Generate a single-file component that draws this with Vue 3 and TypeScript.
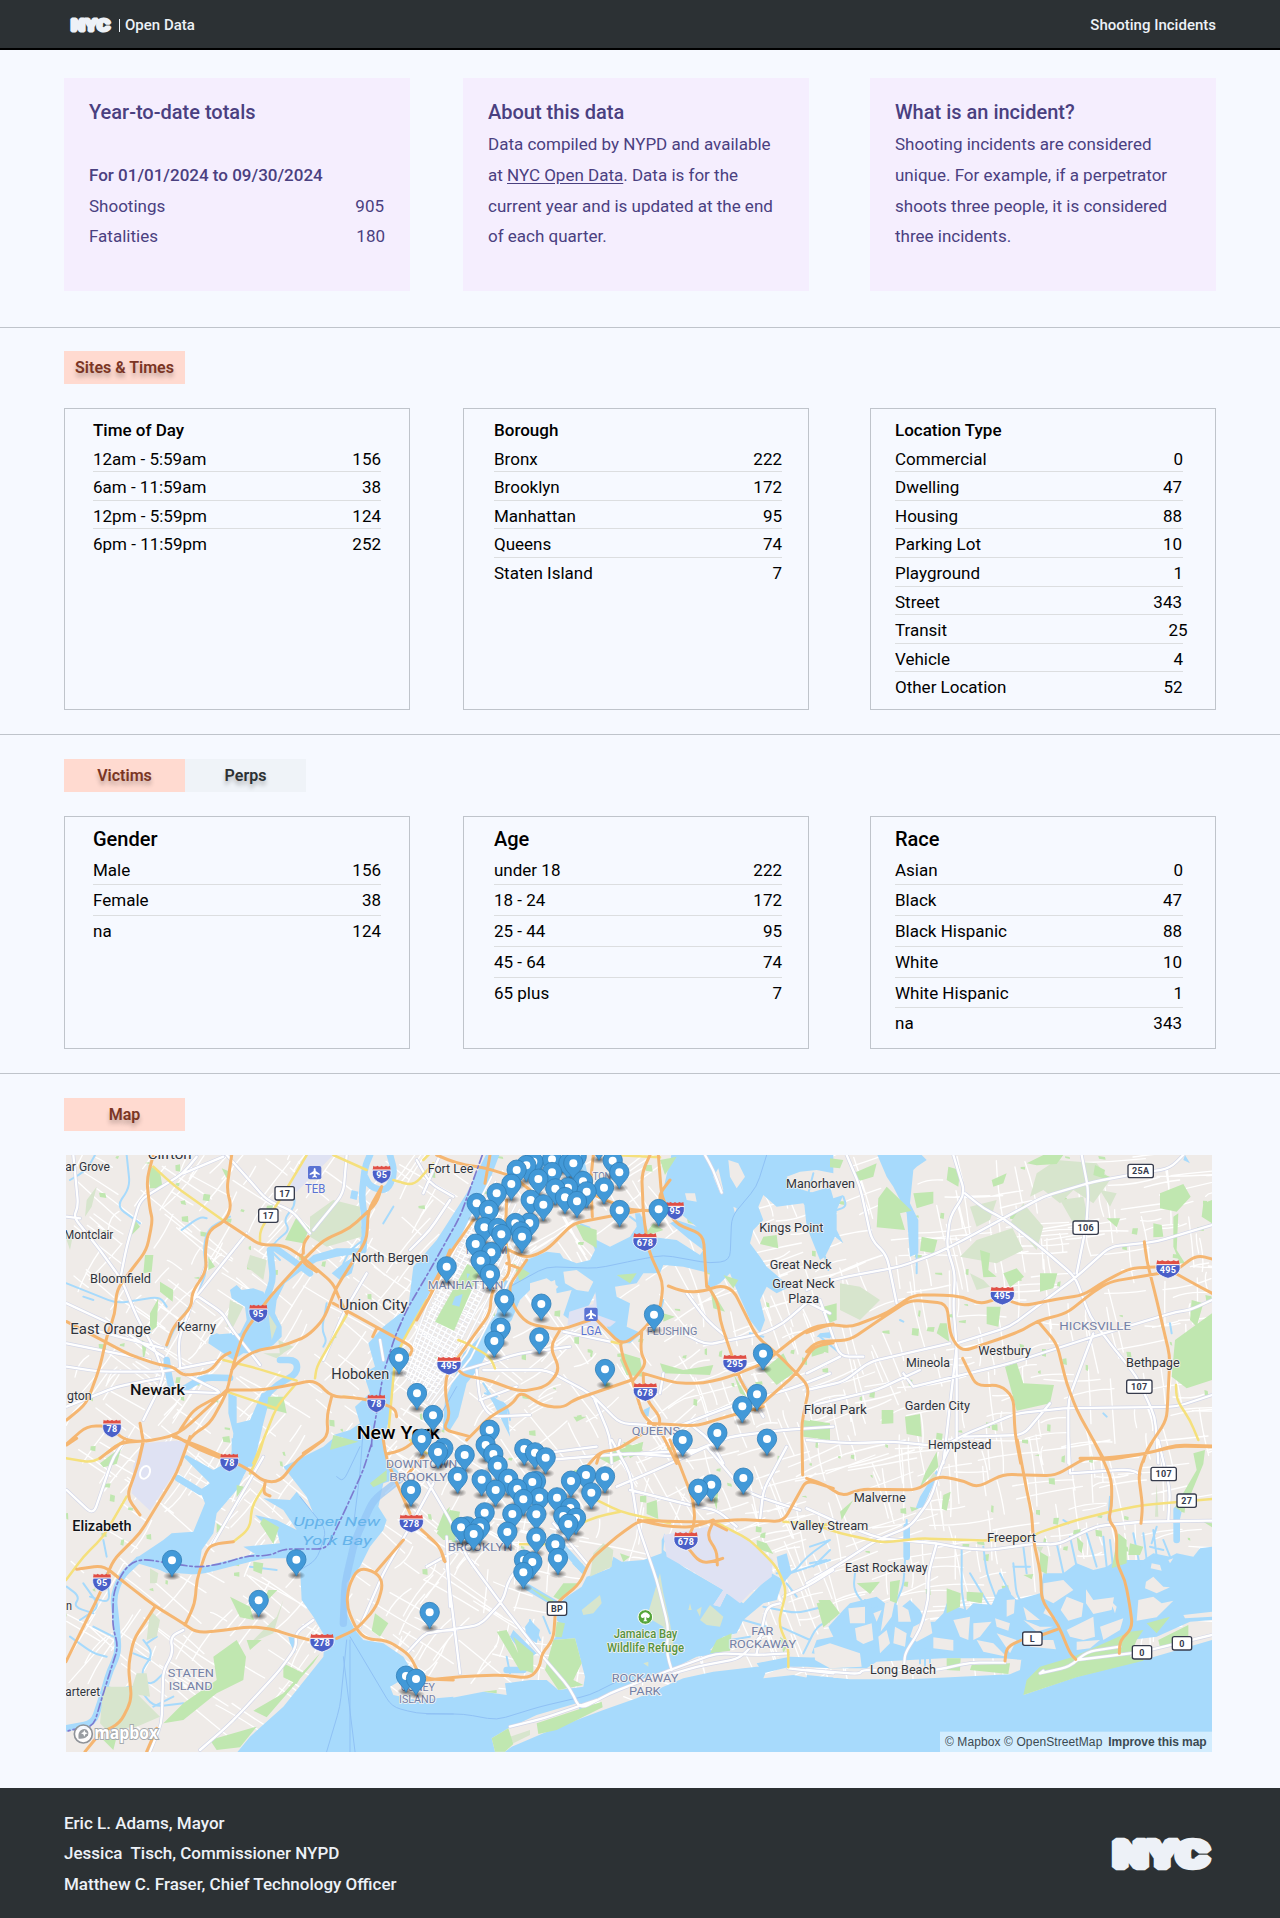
<script setup lang="ts">
interface Row { label: string; value: string; shift: number }
interface Panel { title: string; rows: Row[] }

const r = (label: string, value: string, shift = 0): Row => ({ label, value, shift })

const siteTables: Panel[] = [
  { title: 'Time of Day', rows: [r('12am - 5:59am', '156'), r('6am - 11:59am', '38'), r('12pm - 5:59pm', '124'), r('6pm - 11:59pm', '252')] },
  { title: 'Borough', rows: [r('Bronx', '222'), r('Brooklyn', '172'), r('Manhattan', '95'), r('Queens', '74'), r('Staten Island', '7')] },
  { title: 'Location Type', rows: [r('Commercial', '0'), r('Dwelling', '47', -1), r('Housing', '88', -1), r('Parking Lot', '10', -1), r('Playground', '1'), r('Street', '343', -1), r('Transit', '25', 4.5), r('Vehicle', '4'), r('Other Location', '52', -0.5)] },
]
const peopleTables: Panel[] = [
  { title: 'Gender', rows: [r('Male', '156'), r('Female', '38'), r('na', '124')] },
  { title: 'Age', rows: [r('under 18', '222'), r('18 - 24', '172'), r('25 - 44', '95'), r('45 - 64', '74'), r('65 plus', '7')] },
  { title: 'Race', rows: [r('Asian', '0'), r('Black', '47', -1), r('Black Hispanic', '88', -1), r('White', '10', -1), r('White Hispanic', '1'), r('na', '343', -1)] },
]

/* The map is split into six sheets; each geometry string is local to its sheet. */
type Sheet = 'a' | 'b' | 'c' | 'd' | 'e' | 'f'
const origin: Record<Sheet, [number, number]> = {
  a: [0, 0], b: [1140, 0], c: [2280, 0], d: [0, 900], e: [1140, 900], f: [2280, 900],
}
type Layer = Partial<Record<Sheet, string>>
const lines = (layer: Layer): number[][][] =>
  (Object.keys(layer) as Sheet[]).flatMap((k) => {
    const [ox, oy] = origin[k]
    return (layer[k] as string).split(';').map((s) => s.trim()).filter(Boolean).map((s) =>
      s.split(/\s+/).map((q) => q.split(',').map(Number)).map(([x, y]) => [x + ox, y + oy]))
  })
/* All polygons get the same winding, so overlapping shapes merge instead of cutting holes. */
const build = (layer: Layer): string =>
  lines(layer).map((p) => {
    let area = 0
    p.forEach((a, i) => { const b = p[(i + 1) % p.length]; area += a[0] * b[1] - b[0] * a[1] })
    if (area < 0) p.reverse()
    return 'M' + p.map((a) => a.join(',')).join('L') + 'Z'
  }).join('')
/* Rounded corners for line work. */
const smooth = (layer: Layer): string =>
  lines(layer).map((p) => {
    let d = `M${p[0][0]},${p[0][1]}`
    for (let i = 1; i < p.length - 1; i++) {
      const a = p[i - 1], b = p[i], c = p[i + 1]
      const l1 = Math.hypot(b[0] - a[0], b[1] - a[1]), l2 = Math.hypot(c[0] - b[0], c[1] - b[1])
      const t1 = Math.min(28, l1 / 2) / l1, t2 = Math.min(28, l2 / 2) / l2
      d += `L${b[0] + (a[0] - b[0]) * t1},${b[1] + (a[1] - b[1]) * t1}Q${b[0]},${b[1]} ${b[0] + (c[0] - b[0]) * t2},${b[1] + (c[1] - b[1]) * t2}`
    }
    const e = p[p.length - 1]
    return d + `L${e[0]},${e[1]}`
  }).join('')

const water = build({
  a: '1310,40 1250,160 1160,300 1090,380 1075,500 1000,560 955,610 975,680 940,700 960,760 915,800 930,850 900,870 850,885 920,905 830,930 840,980 1005,980 1000,900 1020,830 1035,700 1050,620 1100,530 1170,400 1230,300 1300,170 1350,40;540,450 560,435 575,450 610,445 640,455 655,480 700,430 745,385 790,345 860,325 930,325 935,340 860,350 800,365 750,395 705,430 680,480 675,520 695,560 695,590 670,615 620,640 580,640 550,660 520,640 475,610 478,590 500,580 530,590 570,580 590,540 585,500 545,475;480,585 545,580 555,600 500,610;535,760 560,770 560,850 600,840 635,760 665,755 640,850 610,980 540,980 550,880 535,820;905,150 925,155 920,180 900,175;845,400 880,370 920,345 905,400 870,420',
  b: '725,40 1210,40 1210,100 1160,90 1110,95 1070,110 1090,140 1150,160 1180,175 1150,180 1180,250 1180,280 1150,250 1120,190 1040,200 1000,165 985,200 1000,240 970,270 960,310 990,350 1010,380 1080,440 1040,460 1010,440 990,480 1005,540 990,580 960,540 920,450 900,400 870,430 830,450 840,400 760,380 700,375 690,400 640,400 620,430 555,440 560,470 600,490 590,560 635,580 600,610 570,610 550,590 530,560 500,530 495,460 470,510 420,540 400,525 425,450 380,460 375,420 300,450 270,480 245,540 210,580 190,600 150,680 110,730 85,830 60,870 38,870 45,780 70,720 100,640 150,590 200,520 210,470 225,420 250,430 290,360 350,335 390,340 400,355 440,370 480,360 495,330 470,270 440,245 480,260 500,300 540,320 600,290 620,260 615,220 630,220 650,260 660,290 740,300 810,345 820,330 780,300 720,250 740,240 800,260 750,220 690,190;75,470 100,465 80,500 62,490;640,810 660,800 655,830 640,825;165,750 230,800 240,890 225,860 190,790;440,40 460,40 470,130 450,120',
  c: '200,40 330,40 350,60 320,80 310,90 300,190 325,240 325,340 300,350 290,220 250,140 230,110;-20,165 60,140 70,175 100,165 80,210 80,270 100,310 75,290 45,350 30,360 -10,260;1125,45 1140,70 1120,60;30,580 70,575 60,595 20,590',
  d: '545,-5 610,-5 605,60 560,150 500,220 490,280 455,330 445,400 350,400 310,380 265,350 340,300 365,280 430,275 465,190 455,165 375,120 385,110 450,150 480,130 400,50 410,45 490,90 545,60;850,-5 1000,-5 1010,60 1060,110 1000,130 985,200 1010,240 1000,270 960,320 930,380 890,430 890,520 915,570 940,600 1000,610 1060,650 1090,700 1020,740 1030,765 1100,780 1210,770 1210,945 555,945 600,890 700,800 820,650 825,590 790,530 755,480 750,380 700,340 620,345 580,320 690,310 680,270 630,240 615,225 680,240 740,270 700,210 640,175 720,180 740,155 790,220 770,170 700,80 760,50 820,20;715,590 740,595 735,640 720,610',
  e: '695,340 640,360 575,365 550,350 540,385 500,400 470,410 455,440 410,470 380,500 380,540 400,560 370,600 435,595 465,710 460,740 385,750 350,720 300,720 225,730 230,765 160,755 60,775 -10,780 -20,945 1210,945 1210,712 1140,715 1090,705 1000,715 1010,690 1075,670 980,680 850,695 760,715 620,775 520,810 440,840 340,880 245,920 225,935 195,935 185,895 235,865 320,825 440,790 450,810 540,755 640,720 720,690 800,650 880,640 840,630 880,590 920,580 940,540 1000,490 1040,480 1060,420 1025,400 940,490 890,460 870,500 850,495 880,450 760,380 700,330 705,280 695,300;980,670 1080,650 1210,655 1210,680 1080,680 1000,700;285,560 300,540 330,570 320,610 290,590;240,590 250,570 320,640 290,660;80,265 110,280 90,320 75,300;1040,350 1070,340 1085,400 1060,430 1045,380',
  f: '-10,705 120,718 300,718 600,703 630,690 635,650 790,650 640,765 800,710 1000,660 1206,600 1210,945 -10,945;55,560 100,510 120,490 200,470 225,490 240,485 275,500 300,480 330,510 345,545 375,545 400,520 410,490 470,510 490,490 545,495 565,450 590,440 600,460 620,480 690,460 700,400 760,400 800,370 850,390 890,380 920,360 1000,360 1030,340 1080,350 1100,340 1150,350 1170,325 1210,320 1210,540 1140,545 1040,590 960,600 870,640 790,660 640,690 640,660 580,655 400,655 200,665 170,685 60,685 -10,680 -10,655 60,650 5,640 20,600 70,590;330,170 380,90 385,100 340,200 315,210;1100,210 1115,215 1105,260 1090,250',
})

const streams = smooth({
  a: '940,330 945,240 935,170 945,80 960,45;1020,45 1035,100 1010,155 960,140 945,110;690,660 740,660 742,700 680,735 650,765;400,748 460,712 540,714;350,660 355,700 365,745;670,320 740,370 780,400;660,330 670,420 650,470',
  d: '265,360 350,385 445,395 560,365 640,345 740,345;265,360 212,410 190,470 200,560 205,640 180,690 160,760 130,850 48,865;385,115 450,155',
  e: '290,440 375,490;370,290 460,390;230,690 280,690',
  f: '290,260 290,350;1100,210 1100,300',
})
const creeks = smooth({
  a: '135,45 110,90 60,120;720,140 740,190 700,240 720,270 680,300 660,330 690,360;350,620 370,570 425,490 470,400 460,320 475,265 540,230;395,270 450,230 470,235;655,330 670,420 640,520 665,590;830,490 815,570 830,600 820,620;880,370 900,330 940,300;870,200 930,220 900,250 940,265;1000,250 1030,200;230,45 240,140 200,200 270,250;50,430 200,490 330,470 350,500;130,480 100,470',
  b: '160,730 190,780 230,790 240,840;600,230 640,260 640,230;165,760 200,770;700,480 690,520;1150,100 1130,180;770,150 780,210;460,60 480,150;960,580 1000,590',
  c: '320,340 320,400;100,170 110,200 80,210;270,540 280,545;30,590 90,640;880,820 890,830;1080,550 1085,580;45,350 55,390',
  d: '50,440 90,470 70,500 130,520;170,400 180,490 120,470;280,600 310,640 270,700 300,740 340,700;200,750 260,735 310,800 400,790;60,590 130,640 170,650;160,300 170,350;130,560 190,590;100,430 150,500 90,540;290,610 320,590;310,800 370,770;170,740 200,750;250,640 300,660;600,380 680,390',
  e: '230,650 240,700;300,540 330,600;250,600 300,650;1040,400 1090,400 1130,350 1200,300;1080,400 1200,360;1070,430 1100,470;1150,380 1200,330;940,540 1010,560;1120,640 1160,560 1200,540;1050,560 1140,600;900,600 960,590;770,360 700,300;430,370 460,400;340,530 360,580;1000,500 1100,520 1180,500',
  f: '135,400 130,450 170,500;285,360 280,440 250,500 240,580;455,330 455,460 470,530;520,320 530,400 560,480;610,370 620,470 650,500;640,320 650,400;780,290 800,380;830,280 860,380;740,310 760,400;880,290 890,380;900,300 910,390;970,280 990,380;1000,280 1010,360;1030,270 1040,350;1060,300 1080,350;480,400 540,500;570,400 600,460;900,170 895,240;330,650 330,670;345,650 345,680;360,650 360,670;610,380 660,380;1020,320 1060,330;290,240 290,280;0,320 60,300;0,370 50,360;760,240 775,250;1040,260 1025,310;165,480 220,530;180,520 200,500;300,620 400,640;120,590 200,620',
})

const islands = build({
  b: '300,430 350,415 385,440 350,475 300,470;400,395 440,390 490,425 475,455 440,450 405,430;895,60 925,70 945,110 920,145 900,110;765,160 795,160 800,185 770,180;910,200 920,205 915,220;865,85 880,150 870,158 850,110',
  f: '115,505 165,500 165,550 120,550;135,565 185,550 190,600 160,612 140,600;12,625 60,610 150,640 155,680 60,685 15,660;225,490 255,480 245,530 212,575;262,490 295,510 303,545 265,545;310,560 360,535 367,580 320,605 300,590;370,592 430,600 430,632 370,625;430,540 480,530 475,600 450,590;490,550 545,545 510,590 490,600;500,600 550,610 590,650 520,635;555,535 600,550 595,572 560,560;590,480 615,478 612,520 590,530;700,430 760,420 790,450 730,490 700,475;770,470 820,490 815,530 775,542 752,510;828,448 850,480 912,472 905,510 850,522 828,490;770,570 850,530 855,590 820,600 780,590;870,560 940,535 930,570 880,600;1008,425 1030,410 1060,440 1080,442 1040,460 1005,445;985,480 1030,470 1055,490 1090,482 1040,532 980,542;1025,370 1050,375 1055,392 1022,385;650,600 730,600 738,628 660,620;560,580 620,600 600,640;640,500 690,540 650,540;190,520 215,510 200,545;205,590 230,570 240,610 210,640;255,560 290,580 285,620 250,610;640,540 690,560 730,560 680,575;1120,525 1206,515 1206,530 1125,535;710,500 740,540 700,520;800,605 870,600 840,625 800,630;900,480 920,500 915,520;1075,360 1090,355 1080,370',
})
const marsh = build({
  a: '780,230 850,180 930,200 935,290 830,320 780,290;540,480 580,500 550,560 530,560;600,345 650,360 640,420 590,380;655,520 680,560 665,600;685,600 730,620 690,645;640,640 700,640 680,655;110,180 140,140 125,200 105,230;50,300 70,280 60,330',
  c: '740,60 860,70 900,120 850,190 790,150 750,190 700,150 660,170 680,100;750,180 820,170 835,240 790,250;640,190 700,260 680,330 620,260 500,300 450,350 560,370 640,330 600,250;90,430 150,440 210,480 150,540 90,510;480,200 560,180 540,240 500,260;230,140 290,210 250,220;870,150 920,160 900,200;500,450 540,440 520,420 480,400',
  d: '160,740 240,740 330,830 260,860 170,870 150,850;300,510 330,540 320,590 290,600;300,385 325,400 320,430 300,430;600,610 680,530 700,480 670,580;240,760 300,770 290,700 260,700',
  e: '455,510 510,465 515,490 490,520 460,525;660,500 690,400 700,460 720,550 735,640 715,640 700,560 650,530;810,540 840,495 880,530 870,560 830,555;640,670 655,665 655,680;490,340 520,310 550,330 545,380 480,410;780,490 785,510 775,510;240,890 300,870 300,885 250,910;800,510 815,500 810,530',
  f: '350,130 370,100 390,110;1040,130 1045,230 1035,230;680,320 700,320 690,340',
})
const parks = build({
  a: '295,75 330,95 338,145 300,145;705,300 740,230 778,265 760,310;285,345 310,345 305,395 280,400;330,425 370,450 368,485 330,455;300,520 325,475 320,560 300,575;275,600 292,610 280,665;655,770 700,770 710,820 650,805;850,885 925,905 840,930;255,240 270,260 245,285;515,85 540,95 530,115;475,350 495,380 475,390',
  b: '435,250 500,270 500,325 460,300;670,250 700,270 640,290;580,640 630,655 640,710 590,705 570,660;690,670 760,690 850,675 840,705 700,700;1000,690 1060,640 1090,700 1040,735;840,440 885,515 850,505;880,405 925,420 910,445;690,60 740,50 705,105;250,370 300,400 270,425;1000,290 1040,285 1045,325 990,312;910,700 950,770 930,760;560,405 620,400 600,430;1120,840 1200,850 1200,900 1120,890;580,905 640,930 600,955;430,830 470,830 440,845;700,520 735,530 700,545;1140,620 1195,610 1195,640',
  c: '205,175 230,140 305,212 270,220 285,270 200,262;130,100 200,70 190,110 150,122;310,160 370,155 370,190 320,205;335,290 382,300 372,340 330,332;415,80 450,90 445,140 410,120;510,330 540,340 535,390 560,410 520,412;580,400 620,385 642,410 600,442;690,400 742,400 730,445 690,455;530,500 572,500 565,560 530,552;1050,160 1120,132 1142,170 1100,215 1050,205;1095,600 1206,520 1206,720 1130,745 1085,710;585,680 620,668 640,730 732,735 720,790 620,812;890,235 930,235 920,262;1030,250 1055,255 1060,290 1030,292;40,500 80,490 80,540 50,552;390,550 410,550 418,605 380,580;215,810 250,810 250,850 215,852;285,830 330,822 335,890 290,882;0,840 60,850 50,900 0,892;650,70 700,45 760,45 740,72 680,76;1180,190 1206,180 1206,250 1175,230;60,55 100,60 90,85 60,82;855,75 885,90 880,115 850,105;545,120 590,100 580,130 550,140;1090,230 1105,220 1100,330 1125,370 1110,370 1090,320;1145,480 1180,490 1160,560 1140,540;5,620 55,620 40,640 5,650;870,100 900,110 880,118',
  d: '350,840 400,790 500,720 490,650 560,600 588,650 580,720 500,760 400,840 340,850;700,670 760,700 740,732 700,712;810,640 790,670 650,832 610,812 700,760;480,900 620,860 570,922 500,930;540,470 600,500 612,540 570,532;655,450 682,450 630,505;610,365 640,370 635,402 610,392;960,130 1010,90 1010,122 970,142;150,70 215,20 200,72 160,82;975,520 1015,550 990,590 965,572;640,235 687,262 670,312 630,250;560,135 582,140 560,172;160,900 200,890 190,930;590,600 635,600 600,630;1200,200 1180,270 1160,270 1180,220;500,250 515,260 500,280;45,500 50,530 40,520',
  e: '20,280 60,210 90,215 75,300 40,300;370,600 435,595 455,670 430,720 460,735 385,750 345,690;250,590 310,640 310,700 280,690;200,575 230,570 290,690 270,692;370,470 400,430 450,430 390,480;295,440 372,482 365,492;380,545 405,550 395,592 375,590;320,850 515,785 518,802 380,870 325,882;185,895 235,865 250,912 225,935 195,935;650,190 680,180 685,237 650,222;500,50 640,5 635,30 540,72;860,600 905,580 900,632 840,640;980,300 1010,310 1030,342 980,325;1165,480 1200,480 1200,550;1050,590 1075,610 1060,640;850,180 865,150 860,210;570,340 600,350 580,365;160,755 200,750 200,760',
  f: '20,490 60,480 90,520 40,562;140,430 210,425 180,462;240,425 270,420 260,490 240,482;345,100 380,35 385,80 330,142;400,165 422,155 410,212 395,206;410,445 452,460 450,500 410,520;470,455 520,458 515,490 470,482;690,335 715,350 710,402 690,392;1150,40 1185,30 1180,72 1120,217 1095,202 1160,90;925,280 950,300 950,370 905,385;640,765 650,720 690,680 790,650 960,575 1000,570 980,600 960,650 1000,650 1000,662 800,712;1045,600 1135,555 1135,600 1050,622;1180,245 1206,250 1206,262;485,675 600,670 595,702 480,690;410,655 452,655 450,692 410,690;800,290 820,310 815,340 805,330;300,200 325,205 305,215;640,405 670,402 665,418;90,215 130,180 95,240;960,310 1000,320 990,345 955,345;1010,550 1080,530 1040,580',
})
const centralPark = build({ b: '112,372 150,392 72,572 15,545' })
const reservoir = build({ b: '75,470 98,462 88,500 66,494;110,400 120,402 112,416' })
const airports = build({
  a: '770,45 850,45 740,155 715,145;300,908 410,908 390,965 275,965',
  b: '418,515 490,492 497,455 502,525 558,545 540,560 412,556',
  d: '275,10 410,0 385,80 300,212 245,160 250,80',
  e: '700,285 860,255 950,290 1030,360 1025,410 960,460 930,490 890,460 870,500 850,495 880,450 780,390 710,350',
})

const orange = smooth({
  a: '310,45 290,120 300,210 308,240 290,330 240,395 200,450 195,520 170,590 150,680 110,790 50,840;545,45 530,150 545,200 525,245 475,270 465,340 470,390 425,460 425,500 370,560 350,615;525,245 630,315 700,315 750,345 850,430 865,470 890,520;995,140 980,190 900,265 820,300 760,360 660,470 580,580 545,690 530,760 480,850 420,890 390,975;995,140 955,210 950,300 860,440 820,540 770,590 690,620 620,630 570,660 545,690;50,545 165,605 240,645 330,675 370,680 400,708 480,695 515,650 540,638;50,912 110,858 180,858 220,900 280,905 360,890 400,870 530,750;280,905 265,970;380,890 450,930 540,965;220,905 170,940;390,870 430,810 540,750;530,750 640,750 720,735 795,720 845,770 910,772 980,785 1035,805 1040,830;845,770 830,830 835,890 760,940;850,490 1090,622 1080,645;755,345 760,370 800,395;760,340 760,310 775,290;980,565 968,590;1200,330 1150,450 1100,540;280,905 270,850',
  b: '20,45 80,70 170,85 250,110 300,150;180,45 165,130;130,240 60,340 0,450;230,180 225,300 240,370 235,410 185,450 180,520 100,630 50,700 45,760 60,830 38,868 120,890;290,360 235,440 250,500 290,550 390,570 480,540;500,540 575,615 630,580 690,510 700,430 655,330 640,220 635,100 660,45;685,45 695,170 735,250 820,285 830,440;480,160 600,210 735,215;215,320 290,355 350,330 430,250 560,225 640,210;490,45 482,120 487,230;715,438 760,455 820,455 870,435 910,450 980,590 1040,640 1100,700 1138,740 1115,850 1118,1005;835,440 865,490 870,540 890,600 930,720 980,800;572,615 580,660 600,700 640,830 690,870 740,970;640,700 740,730 820,730 900,710 1000,670 1100,590 1150,560 1210,552;605,720 430,780 400,803 340,798 270,755 250,790 180,830 110,900;390,570 360,620 390,690 350,740 270,755 160,715 105,708 85,690;635,575 632,640 650,670 610,720;975,810 1100,700 1150,620 1210,608;640,700 640,730 650,780 690,830 688,855;655,850 800,858 890,830 1000,800;500,970 510,935 560,930 640,880;230,370 268,385;690,180 690,160 720,120',
  c: '-10,578 60,552 120,562 230,520 310,465 400,465 460,470 510,492 550,480;605,485 640,497 740,478 820,465 890,420 960,385 1050,380;-10,635 20,605 120,600 230,525 300,480 410,490 422,590 455,635 560,600 640,570 680,543 770,520 850,455 900,425 960,415 1050,400;1110,382 1160,345 1210,358;1100,402 1150,430 1210,462;1003,305 1010,360 1040,480 1080,650 1070,840 1010,930 1000,965;685,545 740,610 770,730 800,810 880,955;458,655 480,700 500,738 570,735 610,770 615,880 632,970;810,955 880,955 1010,940 1100,915 1206,918',
  d: '420,-10 380,100 270,280 190,360 150,460 48,665;370,-10 440,15 520,50 600,90 640,125 690,125 740,60 820,0;280,0 262,80 230,170 270,225;50,15 80,-5;290,2 210,8 150,55;80,388 160,376 220,425 310,495 400,550 440,578 520,572 590,560 660,565 720,585 780,600;860,595 920,568 980,500 1000,430 978,395 925,383 895,440 890,500 920,570 950,598 1010,600 1080,645 1105,700 1140,718 1210,720;978,395 1060,300;1080,220 1010,60 1000,0;1110,265 1170,320 1185,365;405,555 435,490 440,420 470,330 490,312 550,305;315,500 250,600 235,680 245,780 210,850 150,880 105,935;320,865 290,935;1010,42 1060,30 1110,-10;645,130 640,160 660,168;1075,100 1120,50',
  e: '-10,720 120,708 220,705 300,715 330,680 335,640 370,600 378,490 450,430 480,360 560,290 630,240 740,245 860,245 920,238 1060,245 1110,155 1130,120 1210,145;470,80 510,35 560,30 600,5;625,240 700,258 790,262 850,240;720,0 790,180 795,250 775,290;850,245 830,290 860,330 862,375;775,325 810,368 850,365 878,355;-5,290 30,320 42,362;840,245 890,270',
  f: '-10,115 50,135 95,170 150,147 320,150 385,108 460,122 500,143 580,103 735,107 830,52 890,60 1000,42 1100,18 1206,20;850,0 880,60 905,120 905,200 895,240 920,270 920,370 945,420 960,500 968,565 930,600 928,640;622,0 650,150 665,220 670,300 692,400 695,480 745,555 780,640 797,658;1030,0 1005,45 985,100 998,200 993,250;585,663 590,620 635,600;695,585 742,568',
})
const yellow = smooth({
  a: '310,80 370,135 525,245;770,45 690,180 630,270 630,310;850,45 950,90;1030,120 1090,138 1150,70;520,660 620,685 740,722;890,525 800,680 795,715;530,755 680,805;735,735 680,800 640,900 610,970;1130,480 1060,600 1035,660 1015,880;880,770 900,772',
  b: '548,45 690,52;85,600 110,610 180,650 195,685;545,605 575,612;0,40 -20,60',
  c: '1098,735 1100,780 1140,840 1165,900',
  d: '48,55 130,68 210,10;230,170 160,290 100,350 48,420;550,305 600,265 605,200 645,135;640,0 625,50 600,100;1080,0 1130,40',
  e: '490,175 570,215 720,250;430,260 500,230 570,215;270,313 380,313;860,248 960,300 1040,380 1070,450 1045,550 1075,620 1075,682;1060,245 1210,255',
  f: '-10,245 90,280 220,308 330,295 530,302 670,290 680,280 800,240 900,215 1000,195 1206,177',
})
const avenues = smooth({
  a: '70,45 85,200 70,230 150,330 215,420 260,530 320,640 340,700;50,490 200,560 340,650;50,680 150,695 340,695 520,660;440,50 400,100 270,180 230,320 210,420;530,45 580,100 650,180 730,215 780,280;590,280 430,480;430,460 520,520 540,560 630,675;340,700 330,740 280,840;400,700 520,760 400,755;50,800 200,740 330,715;1200,180 1140,270 1080,330;400,100 520,50;950,400 880,520 820,660;50,230 90,235;890,45 880,160 790,270;470,370 385,600 390,680;1100,60 1140,130 1210,170;990,600 1000,660;130,570 340,625;50,610 300,660',
  b: '100,690 270,640 420,620;400,575 540,605;160,690 350,690 480,760 570,850 740,860;140,690 150,780 180,830 300,825;770,460 830,540 900,600 830,615 740,570;850,610 1000,580 1060,550 1140,480;740,860 900,800 1100,740 1200,700;790,860 840,900 880,970;490,770 540,890 545,970;350,960 600,940 740,950;825,45 850,90 875,158;1210,860 1060,870 900,890 750,950;150,780 260,740;700,700 690,760;1000,830 920,700;30,45 -20,160;1200,520 1140,490',
  c: '430,45 465,160 420,230 410,320 435,400 430,500 440,620 440,900;465,160 520,205 580,235 690,320 795,410 840,530 900,610 980,710 1035,830 1045,970;-10,450 30,430 110,410 270,380 380,340 460,300 580,235 700,170 850,125 960,105 1080,85 1120,45;815,45 835,150 830,250 800,400;440,610 600,560 800,410 900,320 1040,305 1206,255;310,740 600,670 850,590 1100,515 1140,510 1206,480;-10,900 120,910 250,905 400,920 460,885 620,820 760,805 1100,800 1206,765;850,580 775,780 775,970;110,45 150,140 185,300 230,345 260,490;-10,750 100,725 180,665 420,610;-10,800 200,750 330,690;30,480 90,650 160,650;280,700 310,740;720,790 640,885 460,890;440,620 400,970;-10,700 90,650',
  d: '50,150 130,225 190,50 230,-5;450,930 530,860 570,820 690,690 740,620 735,580 790,540;400,570 360,590 370,640 340,690 335,850 300,935;640,50 490,310;1150,130 1080,260 1000,400 930,560;1070,640 1130,575 1210,570;1190,290 1200,500',
  e: '-10,120 60,240 110,350 220,500 330,640 420,745 450,808 540,760 720,690;545,0 600,100 625,260 680,420 715,560 710,640 725,690;-10,580 150,555 220,480 235,420 300,340;830,20 940,150 1000,175 1110,210;560,140 700,80 830,20;1070,20 1000,150 990,240;600,150 800,200 860,210 920,260;-10,380 150,290;720,690 860,640 990,645 1075,640;725,702 800,680 930,655 1000,580;1075,685 1210,700;50,370 90,700;240,860 340,835 500,780;570,0 560,45 800,30;370,250 470,370;1060,470 1130,440 1210,390;340,40 500,20;980,640 1010,500 1050,490',
  f: '-10,205 100,255 210,295 380,310 460,325 540,330 680,310 740,315 860,258 1000,245 1206,242;-10,430 100,365 200,300 300,260 360,180 400,60 420,20;380,310 355,400 355,480 330,570 285,640 283,670;-10,690 150,702 155,690 380,690 480,668 585,668;800,660 1000,635 1206,585;690,700 780,680 830,635 930,620;690,700 700,692;780,100 960,88 990,102;1045,0 1080,150 1075,240;775,-10 780,100',
})
const ferries = smooth({
  b: '240,440 350,380 500,385 620,360 700,345 840,370 900,362 905,230 980,140 1010,45;0,880 80,740',
  d: '900,590 1025,800 1100,820 1210,822;860,110 880,125 930,20;900,600 900,935;880,650 915,935;890,600 870,800 830,935;940,-40 930,100 910,260;750,170 830,270 800,360 750,390',
  e: '-10,822 100,822 200,840 330,800 480,765 560,725',
})
const channel = smooth({ d: '1060,110 970,180 915,300 885,430 880,550' })
const border = smooth({
  a: '1297,45 1230,230 1140,390 1070,510 1035,590 1000,700 985,790 965,900 965,920',
  d: '965,10 940,90 890,200 830,327 700,327 660,347 590,348 520,370 450,382 390,375 280,357 240,370 210,410 190,460 188,560 205,620 185,680 160,760 130,860 60,870 48,876',
})

/* Local streets and pocket parks scattered over the land. */
let seed = 7
const rnd = (): number => { seed = (seed * 16807) % 2147483647; return seed / 2147483647 }
let streets = ''
let specks = ''
for (let i = 0; i < 1150; i++) {
  const x = 48 + rnd() * 3440, y = 45 + rnd() * 1650
  const base = x < 1300 ? -0.95 : x < 1900 ? (y > 1100 ? -1.35 : -0.6) : x < 2500 ? -0.3 : -0.12
  const a = base + (rnd() > 0.5 ? Math.PI / 2 : 0) + (rnd() - 0.5) * 0.25
  const l = 50 + rnd() * 160, b = (rnd() - 0.5) * 26
  const dx = Math.cos(a) * l, dy = Math.sin(a) * l
  streets += `M${x.toFixed(0)},${y.toFixed(0)}q${(dx / 2 + b).toFixed(0)},${(dy / 2 + b).toFixed(0)} ${dx.toFixed(0)},${dy.toFixed(0)}`
}
for (let i = 0; i < 230; i++) {
  const x = 48 + rnd() * 3440, y = 45 + rnd() * 1350, w = 6 + rnd() * 16, h = 6 + rnd() * 16
  specks += `M${x.toFixed(0)},${y.toFixed(0)}l${w.toFixed(0)},${(rnd() * 8 - 4).toFixed(0)} ${(rnd() * 6 - 3).toFixed(0)},${h.toFixed(0)} ${(-w).toFixed(0)},-3Z`
}
let blocks = ''
for (let i = 0; i < 12; i++) blocks += `M${1325 + i * 12},${110 + i * 14}L${1130 + i * 12},${500 + i * 14}L${1060 + i * 8},${700 + i * 9}`
for (let i = 0; i < 40; i++) {
  const x = 1290 - i * 6.2, y = 190 + i * 13
  blocks += `M${x},${y}l110,62`
}

type Pt = [number, number]
const pinSets: Partial<Record<Sheet, Pt[]>> = {
  b: [[366, 58], [310, 65], [330, 45], [395, 50], [415, 70], [260, 90], [289, 76], [430, 70], [440, 50], [507, 12], [548, 62], [568, 97], [366, 97], [325, 117], [244, 132], [459, 124], [414, 143], [376, 146], [470, 155], [405, 172], [522, 143], [200, 160], [302, 180], [340, 194], [441, 184], [140, 190], [176, 210], [203, 265], [569, 211], [686, 208], [163, 262], [256, 250], [298, 249], [214, 283], [272, 275], [276, 290], [137, 312], [184, 337], [152, 362], [180, 403], [50, 380], [-93, 653], [-39, 760], [9, 826], [-25, 897], [223, 478], [334, 492], [212, 564], [193, 603], [328, 593], [672, 524], [525, 688], [999, 641], [981, 763], [937, 799], [758, 900], [862, 879], [1011, 897], [179, 870]],
  e: [[40, 25], [24, 36], [104, 45], [167, 15], [190, 42], [203, 77], [283, 27], [315, 38], [347, 53], [83, 111], [155, 119], [235, 117], [197, 150], [262, 147], [280, 178], [307, 126], [318, 124], [328, 173], [381, 173], [423, 123], [468, 105], [525, 110], [484, 158], [421, 204], [400, 228], [438, 234], [319, 223], [319, 293], [164, 218], [247, 222], [93, 262], [112, 260], [131, 282], [150, 262], [232, 276], [415, 252], [376, 313], [384, 355], [282, 360], [280, 397], [307, 366], [805, 147], [844, 134], [940, 114]],
  d: [[1083, 150], [366, 361], [739, 359], [626, 481], [1139, 517], [1068, 708], [1098, 717]],
}
const pins: Pt[] = (Object.keys(pinSets) as Sheet[])
  .flatMap((k) => (pinSets[k] as Pt[]).map(([x, y]): Pt => [x + origin[k][0], y + origin[k][1]]))
  .sort((p, q) => p[1] - q[1])

const interstates: [number, number, string][] = [
  [995, 103, '95'], [625, 520, '95'], [186, 865, '78'], [979, 790, '78'], [1197, 677, '495'], [1875, 212, '95'], [1785, 306, '678'],
  [2055, 671, '295'], [1786, 756, '678'], [2857, 467, '495'], [3354, 387, '495'], [538, 967, '78'], [156, 1327, '95'],
  [1084, 1150, '278'], [816, 1508, '278'], [1908, 1203, '678'],
]
const routes: [number, number, string][] = [
  [704, 160, '17'], [655, 227, '17'], [3272, 93, '25A'], [3107, 263, '106'], [3268, 740, '107'], [1521, 1406, 'BP'],
  [3341, 1002, '107'], [3410, 1082, '27'], [2947, 1496, 'L'], [3276, 1537, '0'], [3396, 1510, '0'],
]

type Label = [string, number, number, number, string]
const labels: Label[] = [
  ['Clifton', 293, 425, 56, 'town'], ['ar Grove', 46, 180, 94, 'town'], ['Montclair', 42, 190, 297, 'town'], ['Bloomfield', 120, 303, 428, 'town'],
  ['East Orange', 61, 303, 581, 'big'], ['Kearny', 381, 498, 572, 'town'], ['North Bergen', 905, 1135, 366, 'town'], ['Union City', 868, 1073, 510, 'big'],
  ['Hoboken', 844, 1018, 718, 'big'], ['Newark', 240, 405, 764, 'city'], ['gton', 51, 125, 780, 'town'], ['New York', 920, 1170, 896, 'metro'],
  ['TEB', 765, 826, 158, 'air'], ['MANHATTAN', 1133, 1360, 446, 'area'], ['HARLEM', 1248, 1372, 341, 'area'], ['TON', 1628, 1684, 119, 'area'],
  ['Fort Lee', 1133, 1270, 98, 'town'], ['Manorhaven', 2208, 2415, 143, 'town'], ['Kings Point', 2128, 2320, 277, 'town'],
  ['Great Neck', 2159, 2345, 387, 'town'], ['Great Neck', 2167, 2354, 445, 'town'], ['Plaza', 2215, 2307, 489, 'town'],
  ['LGA', 1592, 1655, 584, 'air'], ['FLUSHING', 1790, 1942, 585, 'area'], ['QUEENS', 1745, 1890, 885, 'area'], ['Floral Park', 2261, 2450, 823, 'town'],
  ['HICKSVILLE', 3028, 3243, 569, 'area'], ['Westbury', 2785, 2943, 645, 'town'], ['Mineola', 2568, 2700, 682, 'town'], ['Bethpage', 3228, 3389, 681, 'town'],
  ['Garden City', 2564, 2760, 811, 'town'], ['Hempstead', 2634, 2824, 928, 'town'], ['Elizabeth', 67, 245, 1173, 'city2'],
  ['Upper New', 730, 990, 1157, 'bay'], ['York Bay', 755, 965, 1216, 'bay'], ['DOWNTOWN', 1008, 1222, 984, 'area'], ['BROOKLYN', 1018, 1222, 1024, 'area'],
  ['n', 48, 66, 1410, 'town'], ['arteret', 46, 150, 1667, 'town'], ['STATEN', 353, 492, 1610, 'area'], ['ISLAND', 356, 488, 1650, 'area'],
  ['CONEY', 1052, 1155, 1652, 'area'], ['ISLAND', 1047, 1157, 1688, 'area'], ['BROOKLYN', 1193, 1388, 1233, 'area'],
  ['Jamaica Bay', 1691, 1882, 1494, 'green'], ['Wildlife Refuge', 1671, 1902, 1537, 'green'], ['ROCKAWAY', 1685, 1885, 1627, 'area'], ['PARK', 1737, 1832, 1665, 'area'],
  ['FAR', 2104, 2170, 1484, 'area'], ['ROCKAWAY', 2038, 2238, 1523, 'area'], ['Valley Stream', 2221, 2455, 1170, 'town'],
  ['Malverne', 2411, 2567, 1086, 'town'], ['East Rockaway', 2385, 2633, 1296, 'town'], ['Freeport', 2811, 2958, 1207, 'town'], ['Long Beach', 2460, 2658, 1603, 'town'],
]
</script>

<template>
  <div class="page">
    <header class="topbar">
      <div class="brand">
        <svg class="brand-logo" viewBox="0 0 100 33" preserveAspectRatio="none" role="img" aria-label="NYC">
          <text x="2.5" y="29.5" textLength="95" lengthAdjust="spacingAndGlyphs" class="nyc">NYC</text>
        </svg>
        <span class="bar"></span>
        <span>Open Data</span>
      </div>
      <span>Shooting Incidents</span>
    </header>

    <section class="band columns intro-band">
      <article class="intro">
        <h2>Year-to-date totals</h2>
        <p class="period">For 01/01/2024 to 09/30/2024</p>
        <p class="total"><span>Shootings</span><span class="num first">905</span></p>
        <p class="total"><span>Fatalities</span><span class="num">180</span></p>
      </article>
      <article class="intro">
        <h2>About this data</h2>
        <p>Data compiled by NYPD and available<br />at <a>NYC Open Data</a>. Data is for the<br />current year and is updated at the end<br />of each quarter.</p>
      </article>
      <article class="intro">
        <h2>What is an incident?</h2>
        <p>Shooting incidents are considered<br />unique. For example, if a perpetrator<br />shoots three people, it is considered<br />three incidents.</p>
      </article>
    </section>

    <section class="band sites">
      <nav class="tabs"><span class="tab on">Sites &amp; Times</span></nav>
      <div class="columns">
        <article v-for="t in siteTables" :key="t.title" class="panel">
          <h3>{{ t.title }}</h3>
          <div v-for="row in t.rows" :key="row.label" class="row">
            <span>{{ row.label }}</span>
            <span :style="{ transform: `translateX(${row.shift}px)` }">{{ row.value }}</span>
          </div>
        </article>
      </div>
    </section>

    <section class="band people">
      <nav class="tabs"><span class="tab on">Victims</span><span class="tab">Perps</span></nav>
      <div class="columns">
        <article v-for="t in peopleTables" :key="t.title" class="panel">
          <h3>{{ t.title }}</h3>
          <div v-for="row in t.rows" :key="row.label" class="row">
            <span>{{ row.label }}</span>
            <span :style="{ transform: `translateX(${row.shift}px)` }">{{ row.value }}</span>
          </div>
        </article>
      </div>
    </section>

    <section class="band map-band">
      <nav class="tabs"><span class="tab on">Map</span></nav>
      <svg class="map" viewBox="48 45 3438 1791" preserveAspectRatio="none">
        <defs>
          <radialGradient id="shade">
            <stop offset="0" stop-color="#000" stop-opacity=".6" />
            <stop offset="1" stop-color="#000" stop-opacity="0" />
          </radialGradient>
        </defs>
        <rect x="48" y="45" width="3438" height="1791" fill="#efebe8" />
        <path :d="streets" class="line street" />
        <path :d="specks" fill="#c0e7b0" />
        <path :d="water" fill="#a7dafc" />
        <path :d="streams" class="line" stroke="#a7dafc" stroke-width="20" />
        <path :d="creeks" class="line" stroke="#a7dafc" stroke-width="6" />
        <path :d="islands" fill="#efebe8" />
        <path :d="airports" fill="#dfe2f3" />
        <path :d="marsh" fill="#d7e5cd" />
        <path :d="parks" fill="#c0e7b0" />
        <path :d="channel" class="line" stroke="#93c5f7" stroke-width="22" opacity=".7" />
        <path :d="ferries" class="line" stroke="#8fc1f5" stroke-width="3" />
        <path :d="blocks" class="line" stroke="#dfe1ea" stroke-width="7" />
        <path :d="blocks" class="line" stroke="#fff" stroke-width="4.5" />
        <path :d="centralPark" fill="#c0e7b0" />
        <path :d="reservoir" fill="#a7dafc" />
        <ellipse cx="285" cy="997" rx="14" ry="20" class="line" stroke="#fff" stroke-width="6" transform="rotate(25 285 997)" />
        <path :d="avenues" class="line" stroke="#d3d7e8" stroke-width="11" />
        <path :d="avenues" class="line" stroke="#fff" stroke-width="7" />
        <path :d="yellow" class="line" stroke="#f5e07c" stroke-width="7.5" />
        <path :d="orange" class="line" stroke="#f5b671" stroke-width="9" />
        <path :d="border" class="line" stroke="#7d7bd0" stroke-width="5" stroke-dasharray="26 9 7 9" />

        <g transform="translate(794 98)">
          <rect x="-20" y="-20" width="40" height="40" rx="6" fill="#5a73d3" />
          <path d="M0-14q3 0 3 5v4l12 8v4l-12-4v6l4 3v3l-7-2-7 2v-3l4-3v-6l-12 4v-4l12-8v-4q0-5 3-5" fill="#fff" />
        </g>
        <g transform="translate(1623 523)">
          <rect x="-20" y="-20" width="40" height="40" rx="6" fill="#5a73d3" />
          <path d="M0-14q3 0 3 5v4l12 8v4l-12-4v6l4 3v3l-7-2-7 2v-3l4-3v-6l-12 4v-4l12-8v-4q0-5 3-5" fill="#fff" />
        </g>
        <g transform="translate(1786 1431)">
          <circle r="22" fill="#56a53a" stroke="#fff" stroke-width="3" />
          <path d="M-11 2a7 7 0 0 1 2-12 10 8 0 0 1 18 0 7 7 0 0 1 2 12q-5 2-8-2v9l4 4h-14l4-4v-9q-3 4-8 2" fill="#fff" />
        </g>

        <text v-for="(l, i) in labels" :key="'l' + i" :x="l[1]" :y="l[3]" :textLength="l[2] - l[1]" lengthAdjust="spacingAndGlyphs" :class="['label', l[4]]">{{ l[0] }}</text>

        <g v-for="(s, i) in interstates" :key="'i' + i" :transform="`translate(${s[0]} ${s[1]})`">
          <g :transform="s[2].length > 2 ? 'scale(1.3 1)' : 'scale(1 1)'">
            <path d="M-27-14C-32 10-18 21 0 28 18 21 32 10 27-14Z" fill="#4a5fc8" stroke="#fff" stroke-width="2" />
            <path d="M-27-13l2-13q6 5 12 0 7 6 13 0 6 6 13 0 6 5 12 0l2 13Z" fill="#e04f45" />
            <path d="M-27-13h54" stroke="#fff" stroke-width="3" />
          </g>
          <text y="11" class="shield-num">{{ s[2] }}</text>
        </g>
        <g v-for="(s, i) in routes" :key="'r' + i" :transform="`translate(${s[0]} ${s[1]})`">
          <rect :x="s[2].length > 2 ? -38 : -29" y="-20" :width="s[2].length > 2 ? 76 : 58" height="40" rx="6" fill="#fff" stroke="#363b4c" stroke-width="4" />
          <text y="10" class="route-num">{{ s[2] }}</text>
        </g>

        <g v-for="(p, i) in pins" :key="'p' + i" :transform="`translate(${p[0]} ${p[1]})`">
          <ellipse cy="47" rx="27" ry="13" fill="url(#shade)" />
          <path d="M0 49C-7 31-29 20-29-1A29 29 0 0 1 29-1C29 20 7 31 0 49Z" fill="#4299d8" stroke="#3180b8" stroke-width="2.5" />
          <circle r="12" fill="#fff" />
        </g>

        <g transform="translate(100 1782)">
          <circle r="27" fill="#fff" fill-opacity=".9" stroke="#8f9399" stroke-width="5" />
          <path d="M-14 14C-17-2-11-14 3-15A13 13 0 0 1 14 4C9 13-2 15-14 14Z" fill="#999da2" />
          <path d="M3-12l3 7 7 3-7 3-3 7-3-7-7-3 7-3Z" fill="#fff" />
          <text x="33" y="16" textLength="191" lengthAdjust="spacingAndGlyphs" class="mapbox">mapbox</text>
        </g>
        <rect x="2670" y="1775" width="816" height="61" fill="#fff" fill-opacity=".5" />
        <text x="2685" y="1817" textLength="472" class="credit">© Mapbox © OpenStreetMap</text>
        <text x="3175" y="1817" textLength="295" class="credit strong">Improve this map</text>
      </svg>
    </section>

    <footer class="footer">
      <div class="people-list">
        <span>Eric L. Adams, Mayor</span>
        <span>Jessica&nbsp; Tisch, Commissioner NYPD</span>
        <span>Matthew C. Fraser, Chief Technology Officer</span>
      </div>
      <svg class="footer-logo" viewBox="0 0 100 33" role="img" aria-label="NYC">
        <text x="2.5" y="29.5" textLength="95" lengthAdjust="spacingAndGlyphs" class="nyc">NYC</text>
      </svg>
    </footer>
  </div>
</template>

<style>
body { margin: 0; }
</style>

<style scoped>
.page { width: 1280px; height: 1918px; background: #f6f9ff; font-family: Roboto, "Liberation Sans", sans-serif; font-size: 17px; color: #000; overflow: hidden; }
h2, h3, p { margin: 0; }
.topbar { box-sizing: border-box; height: 50px; padding: 1px 64px 0; background: #2c3134; border-bottom: 2px solid #000; display: flex; justify-content: space-between; align-items: center; color: #edf1f7; font-size: 15px; font-weight: 500; }
.brand { display: flex; align-items: center; padding-left: 6px; }
.brand-logo { width: 41px; height: 15px; margin-top: 1px; overflow: visible; }
.bar { width: 1px; height: 13px; background: #edf1f7; margin: 1px 5px 0 8px; }
.nyc { font: 900 37px Roboto, sans-serif; fill: #edf1f7; stroke: #edf1f7; stroke-width: 6.5px; stroke-linejoin: bevel; }
.band { box-sizing: border-box; padding-left: 64px; border-bottom: 1px solid #bfc4cb; }
.columns { display: grid; grid-template-columns: 346px 346px 346px; column-gap: 53px; }
.columns > :nth-child(3) { margin-left: 8px; margin-right: -8px; }
.intro-band { height: 278px; padding-top: 28px; align-items: start; }
.intro { box-sizing: border-box; height: 213px; background: #f5eefe; color: #4a4080; padding: 20px 25px 0; line-height: 30.8px; white-space: nowrap; }
.intro h2 { font-size: 20px; font-weight: 500; line-height: 28px; margin-bottom: 3px; }
.intro .period { font-weight: 500; margin-top: 33.8px; }
.total { display: flex; justify-content: space-between; }
.num.first { margin-right: 1px; }
.intro a { text-decoration: underline; text-underline-offset: 2px; }
.tabs { display: flex; height: 33px; }
.tab { width: 121px; background: #eff3f8; text-align: center; font-weight: 600; font-size: 16px; line-height: 34px; color: #2c3134; text-shadow: 0 4px 4px rgba(0, 0, 0, .25); }
.tab.on { background: #ffdad0; color: #7b3524; }
.sites { height: 407px; padding-top: 23px; }
.people { height: 339px; padding-top: 24px; }
.sites .tabs, .people .tabs { margin-bottom: 24px; }
.panel { box-sizing: border-box; border: 1px solid #bfc4cb; padding: 7px 28px 0; }
.panel:nth-child(2) { padding-left: 30px; padding-right: 26px; }
.panel:nth-child(3) { padding-left: 24px; padding-right: 32px; }
.sites .panel { height: 302px; }
.people .panel { height: 233px; }
.panel h3 { font-size: 17px; font-weight: 500; line-height: 29px; height: 27.8px; }
.row { box-sizing: border-box; display: flex; justify-content: space-between; height: 28.55px; line-height: 31px; border-bottom: 1px solid #dcdee0; }
.row:last-child { border-bottom: 0; }
.people .panel h3 { font-size: 20px; height: 30.8px; line-height: 30.8px; }
.people .row { height: 30.7px; line-height: 31px; }
.map-band { height: 714px; padding-top: 24px; border-bottom: 0; }
.map { display: block; width: 1146px; height: 597px; margin: 24px 0 0 2px; }
.line { fill: none; stroke-linecap: round; stroke-linejoin: round; }
.street { stroke: #fff; stroke-width: 4px; }
.label { font-family: Roboto, sans-serif; font-size: 40px; fill: #30343c; paint-order: stroke; stroke: #f4f2f0; stroke-width: 5px; stroke-linejoin: round; }
.big { font-size: 44px; }
.city { font-size: 46px; font-weight: 500; fill: #101216; }
.city2 { font-size: 42px; font-weight: 500; fill: #101216; }
.metro { font-size: 54px; font-weight: 500; fill: #000; }
.area { font-size: 32px; fill: #7380a6; }
.air { font-size: 36px; fill: #5a73d3; }
.green { font-size: 36px; font-weight: 500; fill: #55933f; }
.bay { font-size: 38px; font-style: italic; fill: #65b3ea; stroke: none; }
.shield-num { font: 700 27px Roboto, sans-serif; fill: #fff; text-anchor: middle; letter-spacing: 1px; }
.route-num { font: 700 27px Roboto, sans-serif; fill: #363b4c; text-anchor: middle; letter-spacing: 1px; }
.mapbox { font: 700 52px "Open Sans", sans-serif; fill: #fff; stroke: #a5a9ac; stroke-width: 6px; paint-order: stroke; }
.credit { font: 36px "Liberation Sans", sans-serif; fill: #3b4a52; }
.strong { font-weight: 700; }
.footer { box-sizing: border-box; height: 130px; padding: 19.5px 69px 0 64px; background: #2c3134; color: #edf1f7; display: flex; justify-content: space-between; align-items: flex-start; }
.people-list { display: flex; flex-direction: column; font-weight: 500; line-height: 30.7px; }
.footer-logo { width: 100px; height: 33px; margin-top: 29px; overflow: visible; }
</style>
